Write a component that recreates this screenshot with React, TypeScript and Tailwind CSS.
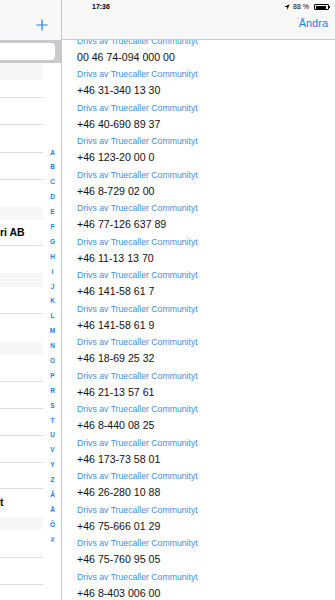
import React from "react";

const numbers = [
  "00 46 74-094 000 00",
  "+46 31-340 13 30",
  "+46 40-690 89 37",
  "+46 123-20 00 0",
  "+46 8-729 02 00",
  "+46 77-126 637 89",
  "+46 11-13 13 70",
  "+46 141-58 61 7",
  "+46 141-58 61 9",
  "+46 18-69 25 32",
  "+46 21-13 57 61",
  "+46 8-440 08 25",
  "+46 173-73 58 01",
  "+46 26-280 10 88",
  "+46 75-666 01 29",
  "+46 75-760 95 05",
  "+46 8-403 006 00",
];

const letters = ["A","B","C","D","E","F","G","H","I","J","K","L","M","N","O","P","R","S","T","U","V","Y","Z","Å","Ä","Ö","#"];

type Item = { kind: "h" | "r"; h: number; line?: boolean; text?: string };

const leftItems: Item[] = [
  { kind: "h", h: 17 },
  { kind: "r", h: 18, line: true },
  { kind: "r", h: 27, line: true },
  { kind: "r", h: 28, line: true },
  { kind: "r", h: 27, line: true },
  { kind: "r", h: 27 },
  { kind: "h", h: 13 },
  { kind: "r", h: 26, line: true, text: "ri AB" },
  { kind: "r", h: 27 },
  { kind: "h", h: 14 },
  { kind: "r", h: 27, line: true },
  { kind: "r", h: 28 },
  { kind: "h", h: 13 },
  { kind: "r", h: 27, line: true },
  { kind: "r", h: 27, line: true },
  { kind: "r", h: 27, line: true },
  { kind: "r", h: 27, line: true },
  { kind: "r", h: 26, line: true },
  { kind: "r", h: 28, text: "t" },
  { kind: "h", h: 13 },
  { kind: "r", h: 28, line: true },
  { kind: "r", h: 27, line: true },
  { kind: "r", h: 27 },
];

export default function App() {
  const font = { fontFamily: '"Liberation Sans", Arial, sans-serif' };
  return (
    <div className="relative w-[335px] h-[600px] overflow-hidden bg-white flex" style={font}>
      {/* status bar overlay */}
      <div className="absolute top-0 left-0 right-0 h-[14px] z-20 flex items-center text-[7px] font-bold text-black">
        <span className="ml-[92px]">17:36</span>
        <div className="ml-auto mr-[5px] flex items-center gap-[3px]">
          <svg width="6" height="6" viewBox="0 0 10 10">
            <path d="M9.5 0.5 L0.5 4.5 L5 5 L5.5 9.5 Z" fill="#000" />
          </svg>
          <span className="font-normal">88 %</span>
          <div className="flex items-center ml-[2px]">
            <div className="w-[15px] h-[6px] border border-black rounded-[1px] p-[0.5px]">
              <div className="h-full w-[88%] bg-black" />
            </div>
            <div className="w-[1px] h-[2.5px] bg-black" />
          </div>
        </div>
      </div>

      {/* left column */}
      <div className="w-[62px] h-[600px] shrink-0 flex flex-col border-r border-[#c8c7cc] overflow-hidden">
        <div className="h-[40px] shrink-0 bg-[#f8f8f8] flex items-end justify-end pr-[13px] pb-[9px]">
          <svg width="12" height="12" viewBox="0 0 12 12">
            <path d="M6 0.5 V11.5 M0.5 6 H11.5" stroke="#1a7ef5" strokeWidth="1.2" />
          </svg>
        </div>
        <div className="h-[23px] shrink-0 bg-[#c9c9ce] flex items-center pr-[6px]">
          <div className="h-[17px] flex-1 bg-white rounded-r-[4px]" />
        </div>
        <div className="flex flex-1 min-h-0 overflow-hidden">
          <div className="w-[43px] shrink-0 flex flex-col">
            {leftItems.map((it, i) =>
              it.kind === "h" ? (
                <div key={i} className="shrink-0 bg-[#f7f7f7]" style={{ height: it.h }} />
              ) : (
                <div
                  key={i}
                  className={`shrink-0 flex items-center text-[10.5px] font-bold text-black whitespace-nowrap ${it.line ? "border-b border-[#dcdce0]" : ""}`}
                  style={{ height: it.h }}
                >
                  {it.text ?? ""}
                </div>
              )
            )}
          </div>
          <div className="w-[19px] shrink-0 flex flex-col items-center pt-[82.5px]">
            {letters.map((l) => (
              <div key={l} className="shrink-0 leading-[14.9px] h-[14.9px] text-[6.5px] font-bold text-[#1a7ef5]">
                {l}
              </div>
            ))}
          </div>
        </div>
      </div>

      {/* right panel */}
      <div className="relative flex-1 flex flex-col bg-white">
        <div className="absolute top-0 left-0 right-0 h-[40px] bg-[#f8f8f8] border-b border-[#c8c7cc] z-10 flex items-end justify-end pr-[7px] pb-[8px]">
          <span className="text-[11px] text-[#1a7ef5]">Ändra</span>
        </div>
        <div className="mt-[35.5px] flex flex-col">
          {numbers.map((n, i) => (
            <div key={i} className="h-[33.5px] shrink-0 pl-[15px] flex flex-col">
              <div className="text-[8.7px] leading-[11px] text-[#3d8fe0] whitespace-nowrap">
                Drivs av Truecaller Communityt
              </div>
              <div className="text-[10.6px] leading-[14px] mt-[3px] text-[#111] whitespace-nowrap">{n}</div>
            </div>
          ))}
        </div>
      </div>
    </div>
  );
}
